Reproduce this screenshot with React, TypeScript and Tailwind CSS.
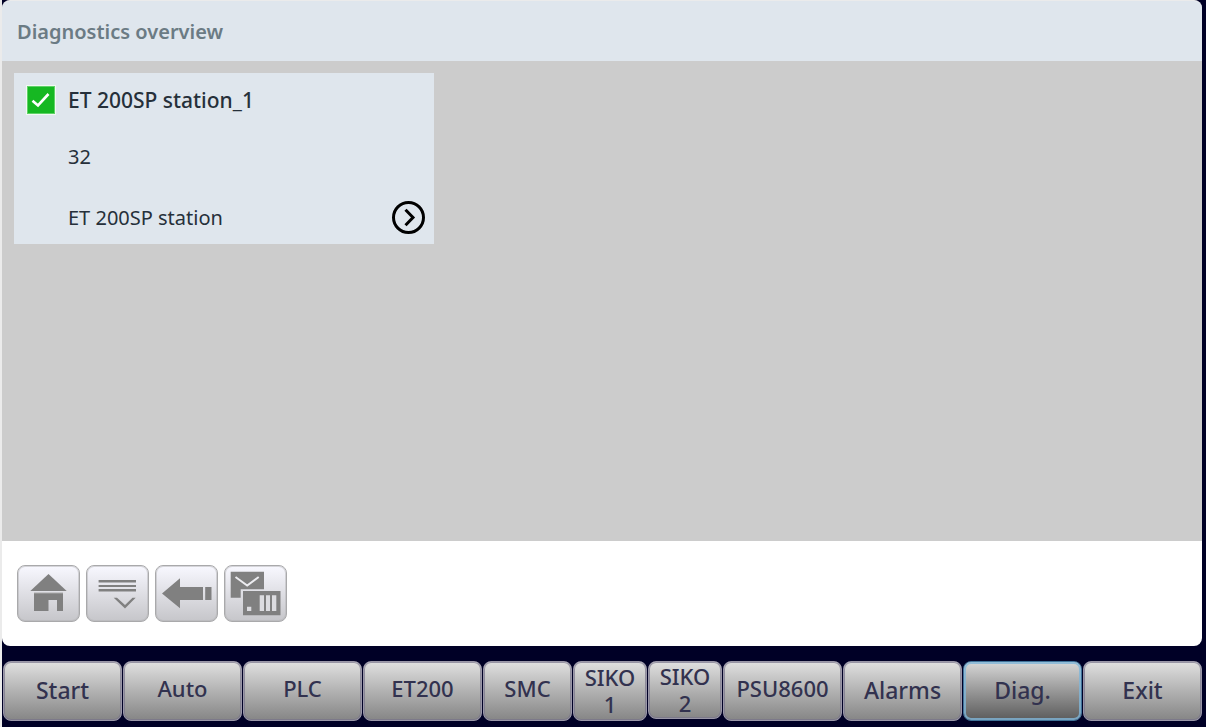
import type { ReactNode } from "react";

type NavItem = { label: string; className: string };

const navItems: NavItem[] = [
  { label: "Start", className: "text-[23px] pb-0.5" },
  { label: "Auto", className: "text-[22px] pb-1.5" },
  { label: "PLC", className: "text-[22px] pb-1.5" },
  { label: "ET200", className: "text-[22px] pb-1.5" },
  { label: "SMC", className: "text-[22px] pb-1.5" },
  { label: "SIKO 1", className: "text-[22px]" },
  { label: "SIKO 2", className: "text-[22px] mb-0.5" },
  { label: "PSU8600", className: "text-[22px] pb-1.5" },
  { label: "Alarms", className: "text-[23px] pb-0.5" },
  { label: "Diag.", className: "text-[23px] pb-0.5" },
  { label: "Exit", className: "text-[23px] pb-0.5" },
];

function NavButton({ item, active }: { item: NavItem; active: boolean }) {
  const tone = active
    ? "border-[#3f7299] bg-linear-to-b from-[#d8d8d8] to-[#5c5c5c] inset-ring-2 inset-ring-[#7fb5d8]/80"
    : "border-[#9a97a8] bg-linear-to-b from-[#e0e0e0] to-[#868686] inset-ring inset-ring-[#77748a]/70";
  return (
    <button
      type="button"
      aria-current={active ? "page" : undefined}
      className={`ml-px flex items-center justify-center rounded-lg border px-2 text-center font-medium leading-[27px] text-[#32324f] ${tone} ${item.className}`}
    >
      {item.label}
    </button>
  );
}

function ToolButton({ label, children }: { label: string; children: ReactNode }) {
  return (
    <button
      type="button"
      aria-label={label}
      className="h-[57px] w-[63px] rounded-lg border border-[#a9a9ab] bg-linear-to-b from-[#f8f8ff] to-[#c6c6ca] inset-ring inset-ring-[#b4b4b6]/50"
    >
      <svg viewBox="1 1 61 55" className="block size-full" fill="#808080" aria-hidden="true">
        {children}
      </svg>
    </button>
  );
}

export default function App() {
  return (
    <div className="flex min-h-screen flex-col border-l-2 border-[#ebebeb] bg-[#000026] font-['Noto_Sans',sans-serif]">
      <main className="mr-1 flex grow flex-col overflow-hidden rounded-lg border-t border-[#ebebeb] bg-white">
        <header className="flex h-[60px] items-center bg-[#dfe6ed] px-[15px] pt-0.5">
          <h1 className="text-xl font-semibold leading-[30px] text-[#6b7b84]">Diagnostics overview</h1>
        </header>

        <section className="grow bg-[#cccccc] p-3">
          <article className="grid h-[171px] w-[420px] grid-cols-[54px_1fr] grid-rows-[56px_56px_59px] items-center bg-[#dfe6ed] text-xl text-[#26303a]">
            <svg viewBox="0 0 30 30" className="mb-0.5 ml-3 size-[30px]" role="img" aria-label="OK">
              <rect width="30" height="30" fill="#f2faf2" />
              <rect x="1" y="1" width="28" height="28" fill="#5fd268" />
              <rect x="2" y="2" width="26" height="26" fill="#16b822" />
              <path d="M6.5 15.700 12 20.500 22.500 9" fill="none" stroke="#fff" strokeWidth="2.6" />
            </svg>
            <h2 className="text-[21px] font-medium">ET 200SP station_1</h2>
            <p className="col-start-2">32</p>
            <div className="col-start-2 flex items-center justify-between pt-1.5 pr-2">
              <p>ET 200SP station</p>
              <button type="button" aria-label="Open station details">
                <svg viewBox="0 0 35 35" className="block size-[35px]" fill="none" stroke="#000" aria-hidden="true">
                  <circle cx="17.5" cy="17.5" r="15" strokeWidth="3" />
                  <path d="M14.5 9.8 22 17.5 14.5 25.2" strokeWidth="3" />
                </svg>
              </button>
            </div>
          </article>
        </section>

        <div className="flex h-[105px] items-center gap-1.5 px-[15px]">
          <ToolButton label="Home">
            <path d="M31.5 9 49.7 26H13.3Z" />
            <path d="M17 28H46V46H40V35H31.5V46H17Z" />
            <path d="M17 28H46" stroke="#aaa" />
          </ToolButton>
          <ToolButton label="Details">
            <path d="M12.6 15H50v2.500H12.600zM12.600 20H50v2H12.600zM12.600 24H50v2.500H12.600z" />
            <path d="M27.700 32.700H31L39 40 46.500 32.700H49.700L39 43.500Z" />
          </ToolButton>
          <ToolButton label="Back">
            <path d="M7 28.4 25 13.300V22H48V35H25v8.300Z" />
            <path d="M50.200 22H56.500V35H50.200Z" />
          </ToolButton>
          <ToolButton label="Diagnostics buffer">
            <path d="M6.700 6.700H40V24.300H16.700V32.700H6.700Z" />
            <path d="M11.500 12 23.200 20.500 34.700 12" fill="none" stroke="#ececf0" strokeWidth="2" />
            <path d="M19 26H56.500V50.300H19Z" />
            <path d="M23 41.700h4.300V46H23zM35.700 30.300H40V46h-4.300zM42 30.300h4V46h-4zM48 30.300h4.300V46H48z" fill="#dcdce0" />
          </ToolButton>
        </div>
      </main>

      <nav
        aria-label="Screens"
        className="mt-[15px] mr-1 mb-1.5 grid h-[60px] grid-cols-[120fr_120fr_120fr_120fr_90fr_75fr_75fr_120fr_120fr_120fr_120fr]"
      >
        {navItems.map((item) => (
          <NavButton key={item.label} item={item} active={item.label === "Diag."} />
        ))}
      </nav>
    </div>
  );
}
